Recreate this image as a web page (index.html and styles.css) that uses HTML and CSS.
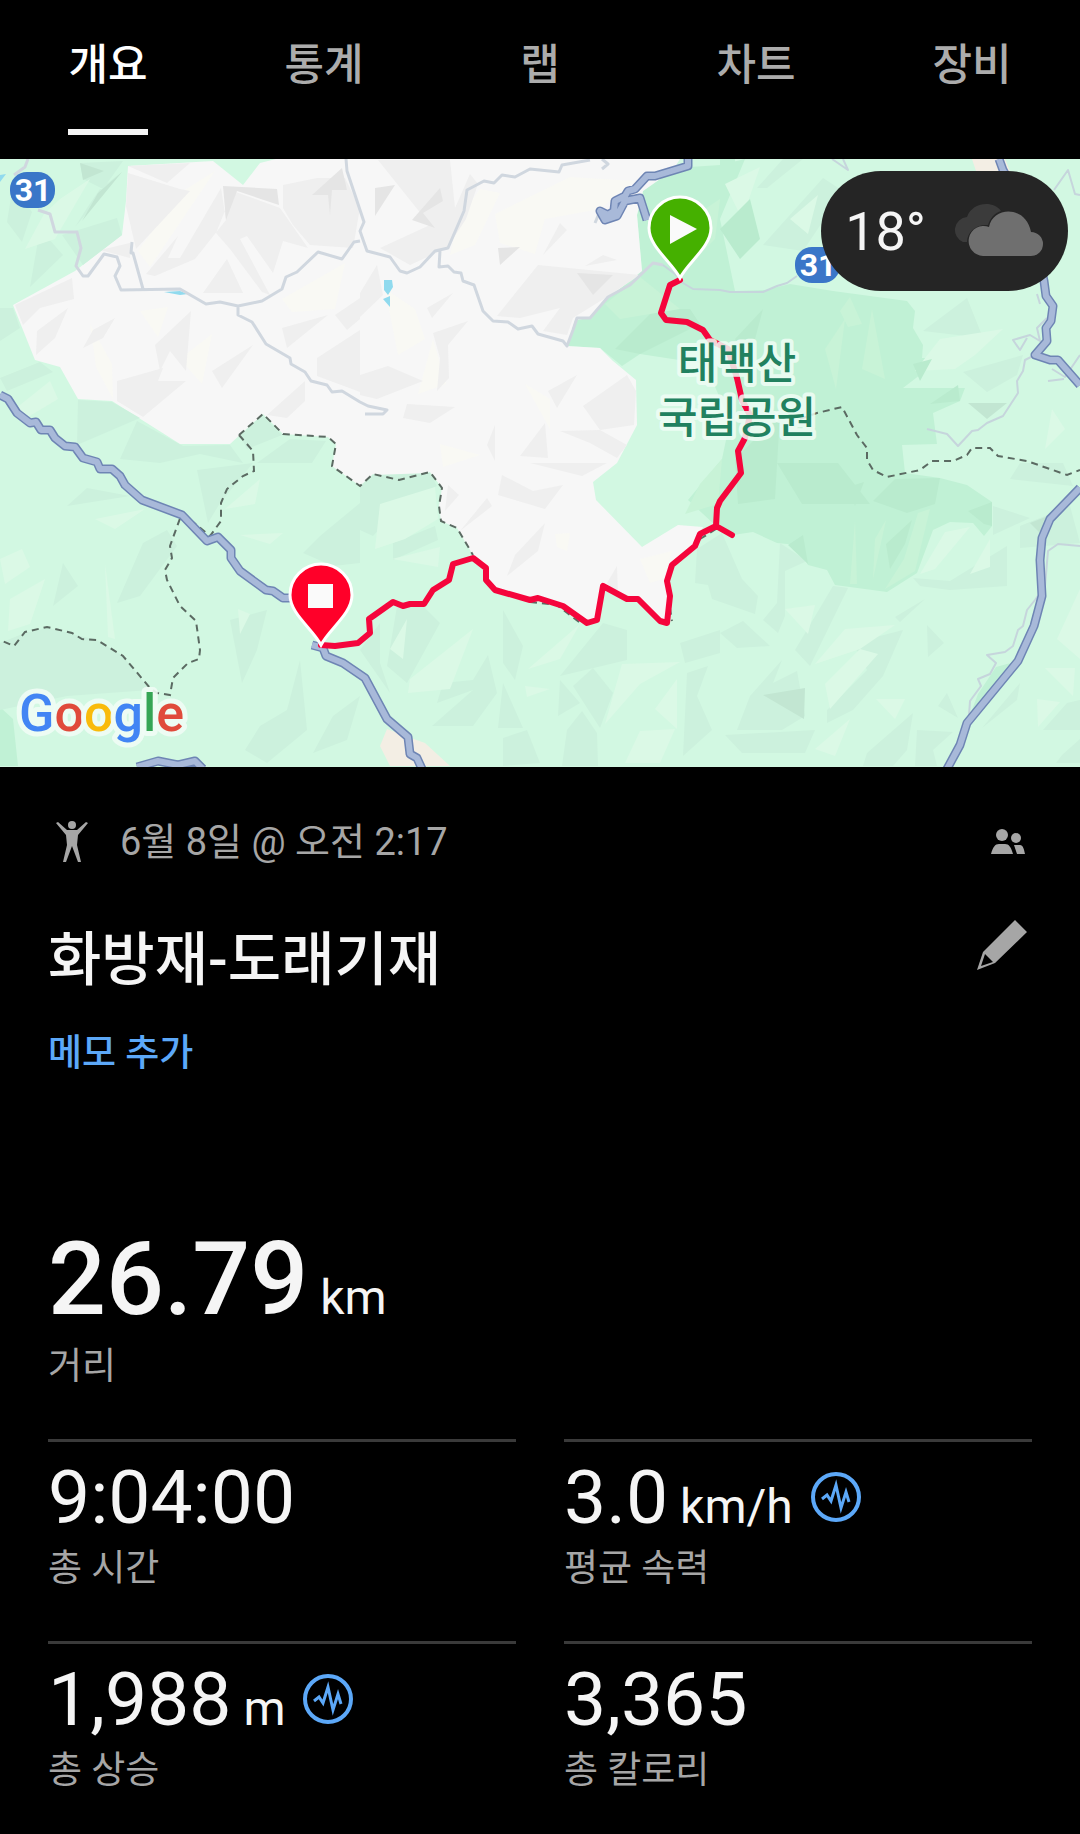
FILE: index.html
```html
<!DOCTYPE html>
<html lang="ko">
<head>
    <meta charset="UTF-8">
    <meta name="viewport" content="width=device-width, initial-scale=1.0">
    <title>화방재-도래기재</title>
    <link rel="stylesheet" href="styles.css">
</head>
<body>
    <nav class="tabs">
        <button class="tab active">개요</button>
        <button class="tab">통계</button>
        <button class="tab">랩</button>
        <button class="tab">차트</button>
        <button class="tab">장비</button>
    </nav>

    <div class="map">
        <svg class="map-svg" viewBox="0 0 1080 608">
            <rect class="land" width="1080" height="608"/>

            <!-- park -->
            <path class="park" d="M673 11L690 8L720 6L745 0L720 60L735 132L765 131L790 125L833 132L907 142L915 152L913 169L923 186L922 199L932 199L933 206L903 229L917 229L965 229L960 242L933 254L937 285L902 286L905 314L940 319L967 326L992 343L992 367L984 377L973 364L950 363L933 371L917 414L887 433L835 426L827 411L808 406L797 386L777 384L753 373L733 376L716 367L688 341L722 300L730 262L705 205L640 195L622 207L600 189L567 187L575 161L590 159L608 139L642 112L637 56L643 32Z"/>
            <path class="park" d="M720 0H735V24L725 30L720 26ZM0 548L13 560L18 607H0ZM1018 502L967 564L978 535L996 508Z"/>

            <!-- bare ground -->
            <path class="bare" d="M128 7L213 2L243 26L260 4L276 0H680L673 11L643 32L637 56L642 112L608 139L590 159L575 161L567 187L600 189L613 202L636 221L637 266L617 304L593 323L596 341L642 388L678 366L703 368L694 387L672 406L667 422L668 437L667 464L638 440L603 427L597 462L583 464L557 444L530 441L495 431L486 421L486 407L473 396L457 369L441 362L439 347L442 329L430 313L399 321L373 315L360 327L332 307L336 285L328 278L283 275L263 255L230 285H180L112 242L78 240L60 208L35 201L13 146L75 112L122 76L126 42Z"/>
            <path class="warm" d="M180 34L215 12L150 108L138 92ZM282 140L345 104L335 150L292 153ZM458 60L480 30L500 34L475 86L450 96ZM495 55L570 18L635 22L600 50L545 60L535 95L500 84ZM180 200L212 175L202 225ZM90 165L112 205L113 240L96 208ZM140 152L168 148L158 178ZM385 130L415 150L425 180L398 196ZM433 180L446 225L418 235ZM525 225L550 240L550 270ZM555 375L570 374L567 392L557 388ZM640 400L672 392L664 420L650 424ZM440 285L480 296L443 308Z"/>
            <path class="peach" d="M387 570L408 578L425 584L450 607H390L380 587ZM972 0H1005L1010 12H976Z"/>
            <path class="grey1" d="M128 7L190 4L167 24ZM128 14L180 30L190 32L136 90L126 47ZM221 29L180 99L168 99L178 77L146 115L155 117L195 100L226 61ZM233 32L280 49L308 89L283 82L273 114L247 77L240 80L270 136L262 133L230 90L216 74ZM227 100L243 134L203 134ZM283 26L317 19L345 19L360 49L353 89L310 86L293 66L283 49ZM15 146L72 119L74 140L40 149L23 166ZM37 172L68 149L55 179L36 196ZM83 189L93 171L115 159L103 179ZM191 152L186 212L170 192L160 212L155 186ZM117 222L163 209L158 222L186 222L143 258L117 242ZM212 212L253 186L222 229ZM282 169L328 156L287 189ZM317 199L360 171V233L317 217ZM100 91L130 84V99ZM335 156L360 139V160L347 171ZM305 222V242L287 259L267 256ZM378 1H450L455 49L470 15L478 25L466 60L447 89L410 106L380 89L430 66ZM538 106L640 116L610 136L573 159L567 176L543 172L560 149L520 159L497 157ZM543 96L560 64L567 71ZM603 96L617 101L585 107ZM360 216L388 207L423 222L377 240L360 236ZM433 174L468 162L448 186L449 219L437 232L440 199ZM407 245L455 248L430 264L403 259ZM548 232L577 216L557 249ZM583 247L627 216L636 232L634 266L600 271ZM545 264L548 299L520 297ZM560 272L600 271L627 286L617 299L590 284ZM495 266V302L487 286ZM360 134L377 106L383 136L360 158ZM427 149L453 134L432 159ZM502 316L533 332L563 326L545 350L498 336ZM530 304H607L582 317ZM448 326L459 336L445 352ZM487 339L492 347L460 372ZM545 364L538 392L507 417L515 396ZM617 407L618 436L607 424Z"/>
            <path class="grey2" d="M223 27L277 30L279 46L237 32L226 61ZM312 36L342 9L347 31H332L330 56L328 36ZM375 29L395 26L375 57ZM440 29L443 42L423 54L435 69L412 61ZM498 89L520 88L500 106ZM577 114L613 116L593 136Z"/>

            <!-- hills -->
            <path class="hill1" d="M80 4L123 2L103 30L83 20ZM122 13L75 68L87 49L100 30ZM7 63L13 26L32 53L22 83ZM40 70L63 96L30 128ZM62 76L117 59L122 76L83 106ZM0 149H13L20 169L0 182ZM0 219L40 203L53 213L7 232ZM78 241L112 243L140 259L77 286ZM120 300L137 262L183 287L230 286L243 304L200 295L160 304ZM262 256L282 276L247 290L240 277ZM257 304L290 280L326 282L312 304ZM67 347L87 329L130 337ZM143 384L167 371L177 387L140 437L117 444ZM63 404L78 427L53 447ZM197 311L253 304L220 344L208 364ZM320 377L360 344V404L333 407L303 394ZM0 484L25 474L48 469L97 481L123 497L150 531L67 537L0 551ZM230 461L267 451L257 491L242 524ZM300 501L287 551L260 567L245 591L267 604L307 571ZM313 594L333 557L360 537L347 581ZM360 327L373 316L430 314L437 327L403 344L373 377L360 371ZM393 384L435 367L438 381L393 401ZM397 447L423 447L440 464L407 524L387 507ZM360 491L380 464V504L390 534ZM503 451L523 487L515 521L503 504ZM488 496L497 534L473 567H432L473 531L437 544L443 524L473 521ZM503 524L523 569H498ZM503 579L527 571L540 604L503 607ZM560 517L603 464L627 471V501ZM560 521L580 544L558 557ZM593 509L613 534L600 569L573 527ZM582 552L597 574L598 607H562L567 571ZM687 514L708 507L697 537L712 571L683 597ZM680 484L720 471V494L685 504ZM697 390L722 374L742 420L758 437L755 455L712 440L708 426L695 424ZM780 384L807 402L785 412V457L778 474L763 461L777 444ZM833 427L848 429L810 507L795 491ZM720 474L743 462L770 487L737 489ZM782 501L750 537L737 571H782L805 557L797 512L773 524ZM725 576L815 571L805 594H742ZM853 484L903 471L883 517L853 551L827 564V551L867 511ZM913 419L950 422L1007 387V427L950 431L920 427ZM927 466L944 484L928 498ZM913 554L907 591L893 607H863L867 594ZM947 534L958 559L938 547ZM917 571L953 573L933 591L937 607H915ZM1020 524L1017 541L982 569ZM1067 544L1080 541V571H1043ZM1020 367L1070 347L1080 384L1020 389ZM1010 320L1020 304H1063L1073 327ZM993 347L1030 359L993 376ZM757 29L783 0H803L767 29ZM763 86L823 19L843 32L803 92ZM923 172L967 139L983 179ZM963 213L1023 196L1017 216L987 233ZM895 458L925 440L900 463ZM1062 596L1080 580V604H1056Z"/>
            <path class="hill2" d="M80 4L104 12L83 21ZM122 13L82 62L98 34ZM763 536L805 529L804 560ZM968 244H1007L987 260ZM1030 364L1048 357L1044 378Z"/>
            <path class="light" d="M25 90L44 55L60 40L90 20L55 80ZM15 250L50 222L58 240L28 258ZM0 400L22 390L30 408L5 425ZM10 440L45 420L30 465L8 472ZM95 360L145 350L115 370ZM225 350L260 320L255 345ZM240 376L283 374L270 385ZM105 405L115 480L108 478ZM238 450L250 455L240 475ZM380 345L435 328L438 360L405 380L375 390ZM392 400L440 388L438 408ZM410 520L473 470L450 530L408 534ZM390 490L407 460L403 500ZM528 510L580 465L560 500ZM525 527L550 530L527 538ZM622 505L680 503L640 525L605 565ZM655 550L677 520V570ZM640 572L675 570L660 604H625ZM815 505L845 470L895 466L860 490ZM825 525L860 490L878 495L830 550ZM876 540H905L895 560ZM815 590L850 560L835 597ZM785 450L815 446L808 475ZM945 373L970 368L935 410L920 415ZM970 415L990 380V408ZM1045 509H1075L1073 537ZM1037 540L1060 543L1038 568ZM1057 480L1080 430V500ZM790 60L818 36L808 75ZM975 196L1003 170L940 180L915 212L955 210ZM1052 250L1045 290L1065 270ZM725 25L760 8L742 60Z"/>
            <path class="park1" d="M735 300L780 255L775 340L738 345ZM777 304H838L870 345H802ZM873 342L895 320L940 319L935 345L907 354ZM848 328L864 323L855 347ZM968 352L992 343V367L984 365ZM788 386L803 376L808 405ZM615 190L655 150L690 150L700 165L640 195ZM913 205L932 200L920 222ZM960 242L930 245L958 226ZM720 70L750 40L760 80L740 100ZM886 385L912 361L905 385L890 410ZM735 180L763 150L755 180L742 190Z"/>
            <path class="park2" d="M855 362L857 425H850ZM875 380L886 361L873 420ZM918 354L930 350L915 412L885 430L904 400ZM872 150L885 220L862 210ZM825 190L845 160L836 230ZM700 325L722 300L718 345L685 355ZM605 145L640 118L680 150L620 160ZM840 152L850 138L862 165L848 168ZM690 60L720 40L715 80L700 95Z"/>

            <!-- water -->
            <path class="water" d="M384 121H392L393 128L388 136L384 131ZM383 140L390 137V148ZM164 133L180 132L188 135L180 136ZM0 16L6 15L0 23Z"/>

            <!-- minor roads -->
            <path class="lane" d="M28 0L25 8L14 16M38 51L50 55L55 73H77L81 89L76 107L83 117H88L104 95L117 98L120 107L115 117L121 131L180 130L206 145L220 143L238 147L262 142L282 130L286 118L297 113L318 93L342 100L354 83L360 82M132 83L131 94H133L143 130M238 147V156L252 163L266 185L290 199L291 205L305 213L311 222L327 226L332 233L342 232L360 243L368 247L387 251L383 255H365M346 0L347 12L364 63L360 72L367 92L390 98L400 112L407 114L420 108L435 92L448 89L464 52L467 31L484 22L494 24L502 16L515 18L530 10L559 13L562 6L590 1M440 92L439 108L448 107L454 113L461 114L463 122L474 126L483 152L493 162L508 163L518 170L532 167L538 175L563 182L567 187L573 171L577 159H590L608 138L630 126L653 104L663 106M602 0L608 5L602 10M595 64L600 52"/>
            <path class="lane lane-green" d="M663 106L675 115L683 124L693 130L720 131L730 133L763 133L777 127L787 124L797 117M927 270L947 275L958 287L972 272L978 271L987 264L1003 257L1018 234L1017 222L1023 212L1025 201L1035 196M1054 31L1068 11L1075 35L1080 36M1047 159L1037 169L1040 182L1030 176L1013 181L1020 191L1027 179M1037 135L1040 145M1080 196L1065 218L1052 210M1048 222L1064 220M832 0L848 11L843 0M1080 387L1058 385L1048 392L1045 427L1035 441L1027 451L1023 467L1018 471L1013 487L1005 493L987 496L996 504L990 515L978 520L981 527L970 542L969 556"/>

            <!-- boundaries -->
            <path class="border-line" d="M239 276L263 255L283 275L328 278L336 285L332 307L360 327L373 315L399 321L430 313L442 329L439 347L441 362L457 369L473 396M239 276L253 292L254 312L243 317L227 330L221 344V362L210 377L182 354L170 387L172 399L165 411L167 421L180 447L196 462L200 491L199 500L188 504L173 519L170 536L157 534L150 529L123 497L97 481L82 480L72 474L47 468L25 473L14 487L0 481M530 443L557 446L583 466M668 437L672 462M700 380L716 370M800 260L817 254L842 248L857 276L867 289V301L873 311L887 318L920 311L932 302H953L967 296L972 289H990L998 297L1027 302L1067 316L1080 311"/>

            <!-- highways, outline and fill -->
            <g class="highway-edge">
                <path id="roads" d="M0 236L8 240L17 254L30 264L36 263L41 271L50 271L55 279L65 287L75 288L83 299L97 303L100 310H112L120 317L125 326L142 341L182 356L207 382L218 378L231 391V399L240 412L266 431L273 432L283 439H293M312 486L323 489L326 497L343 504L365 519L387 560L408 578L410 595L417 599L422 610M1080 329L1050 360L1042 379L1040 401L1042 437L1034 467L1018 502L967 564L960 586L947 610M999 0L1003 11L1030 60L1044 122L1046 137L1053 147L1051 162L1046 169L1047 182L1035 196L1050 201H1058L1080 226M137 608L158 602L178 606L195 602L203 610M688 0V7L655 17H647L635 30L628 32L625 37L615 42L614 52L608 56L600 52L605 61L617 57L625 42L640 39L647 61"/>
            </g>
            <path class="highway" d="M0 236L8 240L17 254L30 264L36 263L41 271L50 271L55 279L65 287L75 288L83 299L97 303L100 310H112L120 317L125 326L142 341L182 356L207 382L218 378L231 391V399L240 412L266 431L273 432L283 439H293M312 486L323 489L326 497L343 504L365 519L387 560L408 578L410 595L417 599L422 610M1080 329L1050 360L1042 379L1040 401L1042 437L1034 467L1018 502L967 564L960 586L947 610M999 0L1003 11L1030 60L1044 122L1046 137L1053 147L1051 162L1046 169L1047 182L1035 196L1050 201H1058L1080 226M137 608L158 602L178 606L195 602L203 610M688 0V7L655 17H647L635 30L628 32L625 37L615 42L614 52L608 56L600 52L605 61L617 57L625 42L640 39L647 61"/>

            <!-- track -->
            <path class="track" d="M680 121L670 126L661 154L666 161L687 163L703 171L710 181L728 190L737 219L742 241L750 256L745 279L738 292L741 314L720 342L717 349L716 367L732 376M716 367L700 375L695 387L672 406L667 422L670 437L667 464L660 462L638 440H627L603 427L597 461L587 464L563 447L538 439L530 441L495 431L486 421V409L473 399L453 405L449 421L433 431L424 445H410L403 447L393 443L369 460L370 474L358 484L335 487L321 486"/>

            <g class="shield">
                <rect x="10" y="13" width="45" height="36" rx="17"/>
                <text x="33" y="42">31</text>
                <rect x="795" y="88" width="45" height="36" rx="17"/>
                <text x="818" y="117">31</text>
            </g>

            <text class="park-name" x="737" y="220">태백산</text>
            <text class="park-name" x="737" y="274">국립공원</text>

            <g class="pin">
                <path class="pin-start" d="M680 119C672 103 649 88 649 69A31 31 0 0 1 711 69C711 88 688 103 680 119Z"/>
                <path class="pin-mark" d="M670 56L697 70L670 85Z"/>
                <path class="pin-end" d="M321 486C313 470 290 455 290 436A31 31 0 0 1 352 436C352 455 329 470 321 486Z"/>
                <rect class="pin-mark" x="308" y="425" width="25" height="24"/>
            </g>

            <text class="google" x="19" y="572"><tspan class="g-blue">G</tspan><tspan class="g-red">o</tspan><tspan class="g-yellow">o</tspan><tspan class="g-blue">g</tspan><tspan class="g-green">l</tspan><tspan class="g-red">e</tspan></text>
        </svg>

        <button class="weather">
            <span>18°</span>
            <svg class="cloud" width="94" height="54" viewBox="0 0 94 54">
                <path fill="#3b3b3b" d="M13 38A13 13 0 0 1 17 13C23 -3 44 -3 51 7C44 9 40 15 38 21C26 20 17 28 17 38Z"/>
                <path fill="#6f6f6f" d="M33 52A15 15 0 1 1 39 23C43 2 76 1 81 28A12 12 0 0 1 81 52Z"/>
            </svg>
        </button>
    </div>

    <main class="content">
        <div class="date-row">
            <svg class="person" width="32" height="42" viewBox="0 0 32 42">
                <circle cx="16" cy="4" r="4"/>
                <path d="M0 2L2 1L11 9H21L30 1L32 2L22 14L21 24L25 41H22L16 25L10 41H7L11 24L10 14Z"/>
            </svg>
            <span class="date">6월 8일 @ 오전 2:17</span>
            <button class="icon-btn">
                <svg width="34" height="26" viewBox="0 0 34 26">
                    <circle cx="11" cy="6" r="6"/>
                    <circle cx="25" cy="9" r="5"/>
                    <path d="M0 25C2 18 4 15 8 15H14C18 15 20 18 22 25ZM23 16H29C32 16 33 20 34 25H26Z"/>
                </svg>
            </button>
        </div>

        <div class="title-row">
            <h1>화방재-도래기재</h1>
            <button class="icon-btn edit">
                <svg width="50" height="50" viewBox="0 0 50 50">
                    <path fill-rule="evenodd" d="M38 0L50 12L18 43L0 50L6 32ZM8 34L4 46L16 42Z"/>
                </svg>
            </button>
        </div>
        <a class="memo" href="#">메모 추가</a>

        <div class="hero">
            <div class="hero-value">26.79<span class="unit">km</span></div>
            <div class="label">거리</div>
        </div>

        <div class="stats">
            <div class="stat">
                <div class="value">
                    <div class="number">9:04:00</div>
                </div>
                <div class="label">총 시간</div>
            </div>
            <div class="stat">
                <div class="value">
                    <div class="number">3.0<span class="unit">km/h</span></div>
                    <button class="graph-btn">
                        <svg width="50" height="52" viewBox="0 0 50 52">
                            <circle cx="25" cy="26" r="23"/>
                            <path d="M11 28L16 24L20 30L25 14L30 37L35 21L38 31"/>
                        </svg>
                    </button>
                </div>
                <div class="label">평균 속력</div>
            </div>
            <div class="stat">
                <div class="value">
                    <div class="number">1,988<span class="unit">m</span></div>
                    <button class="graph-btn">
                        <svg width="50" height="52" viewBox="0 0 50 52">
                            <circle cx="25" cy="26" r="23"/>
                            <path d="M11 28L16 24L20 30L25 14L30 37L35 21L38 31"/>
                        </svg>
                    </button>
                </div>
                <div class="label">총 상승</div>
            </div>
            <div class="stat">
                <div class="value">
                    <div class="number">3,365</div>
                </div>
                <div class="label">총 칼로리</div>
            </div>
        </div>
    </main>
</body>
</html>
```
FILE: styles.css
```css
* {
    box-sizing: border-box;
}
body {
    margin: 0;
    background: #000;
    color: #f5f5f5;
    font-family: Roboto, "Noto Sans CJK KR", sans-serif;
}
button {
    background: none;
    border: 0;
    padding: 0;
    color: inherit;
    font-family: inherit;
    cursor: pointer;
}
svg {
    display: block;
}

/* tabs */
.tabs {
    display: grid;
    grid-template-columns: repeat(5, 1fr);
    justify-items: center;
    padding: 24px 0;
}
.tab {
    height: 111px;
    padding-bottom: 22px;
    border-bottom: 6px solid transparent;
    color: #acacac;
    font-size: 43px;
    font-weight: 500;
    line-height: 83px;
}
.tab.active {
    color: #fff;
    border-color: #f5f5f5;
}

/* map */
.map {
    position: relative;
}
.map-svg {
    width: 100%;
    height: auto;
}
.land { fill: #d2f8e2; }
.park { fill: #c0f1d5; }
.bare { fill: #f7f7f7; }
.warm { fill: #f9f9f4; }
.peach { fill: #f3eee4; }
.grey1 { fill: #efefef; }
.grey2 { fill: #e5e5e5; }
.hill1 { fill: #ccf1dd; }
.hill2 { fill: #c2e6d2; }
.light { fill: #dbf9e6; }
.park1 { fill: #b9ebce; }
.park2 { fill: #c8f3d7; }
.water { fill: #90daee; }
.lane {
    fill: none;
    stroke: #d0d7df;
    stroke-width: 3;
    stroke-linejoin: round;
}
.lane-green {
    stroke: #c6d5dc;
    stroke-width: 2;
}
.border-line {
    fill: none;
    stroke: #5b6a62;
    stroke-width: 2;
    stroke-dasharray: 7 5;
}
.highway-edge {
    fill: none;
    stroke: #6e85b4;
    stroke-width: 9;
    stroke-linejoin: round;
}
.highway {
    fill: none;
    stroke: #a8b9d9;
    stroke-width: 6;
    stroke-linejoin: round;
}
.track {
    fill: none;
    stroke: #f5053c;
    stroke-width: 6;
    stroke-linejoin: round;
    stroke-linecap: round;
}
.shield rect {
    fill: #3a76c8;
}
.shield text {
    fill: #fff;
    font-size: 32px;
    font-weight: 700;
    text-anchor: middle;
}
.park-name {
    fill: #21815f;
    stroke: rgba(240, 253, 246, 0.85);
    stroke-width: 8;
    stroke-linejoin: round;
    paint-order: stroke;
    font-size: 43px;
    font-weight: 500;
    text-anchor: middle;
}
.pin {
    stroke: #fff;
    stroke-width: 3;
}
.pin-start { fill: #45b000; }
.pin-end { fill: #ff0029; }
.pin-mark {
    fill: #fafafa;
    stroke: none;
}
.google {
    font-size: 52px;
    font-weight: 500;
    stroke: rgba(240, 252, 245, 0.9);
    stroke-width: 10;
    stroke-linejoin: round;
    paint-order: stroke;
}
.g-blue { fill: #4285f4; }
.g-red { fill: #e04a3b; }
.g-yellow { fill: #f9bb0b; }
.g-green { fill: #36a555; }

.weather {
    position: absolute;
    top: 12px;
    right: 12px;
    display: flex;
    align-items: center;
    gap: 24px;
    height: 120px;
    padding: 0 24px;
    border-radius: 60px;
    background: #252525;
    color: #f5f5f5;
    font-size: 54px;
}

/* activity info */
.content {
    padding: 51px 48px 40px;
}
.date-row {
    display: flex;
    align-items: center;
    height: 48px;
    padding: 0 7px 0 8px;
    color: #a6a6a6;
}
.person,
.icon-btn svg {
    fill: #a6a6a6;
}
.date {
    flex: 1;
    margin-left: 32px;
    font-size: 38px;
    line-height: 48px;
}
.title-row {
    display: flex;
    justify-content: space-between;
    margin-top: 54px;
}
h1 {
    margin: 0;
    padding-top: 4px;
    font-size: 58px;
    font-weight: 500;
    line-height: 72px;
}
.edit {
    height: 50px;
    margin-right: 5px;
}
.memo {
    display: block;
    width: fit-content;
    margin-top: 34px;
    color: #5ca8f8;
    font-size: 37px;
    font-weight: 500;
    line-height: 48px;
    text-decoration: none;
}

/* numbers */
.hero {
    margin-top: 141px;
    margin-bottom: 48px;
}
.hero-value,
.number {
    display: flex;
    align-items: baseline;
    gap: 12px;
}
.hero-value {
    height: 120px;
    margin-bottom: 4px;
    font-size: 102px;
    font-weight: 500;
    line-height: 120px;
}
.unit {
    font-size: 48px;
    font-weight: 400;
    line-height: 56px;
}
.label {
    color: #a6a6a6;
    font-size: 37px;
    line-height: 48px;
}
.stats {
    display: grid;
    grid-template-columns: 1fr 1fr;
    column-gap: 48px;
}
.stat {
    padding: 11px 0 48px;
    border-top: 3px solid #3a3a3a;
}
.value {
    display: flex;
    align-items: center;
    gap: 18px;
    height: 88px;
    margin-bottom: 4px;
    font-size: 75px;
    line-height: 88px;
}
.graph-btn svg {
    fill: none;
    stroke: #5ca8f8;
    stroke-width: 4;
}
.graph-btn path {
    stroke-width: 3;
}
```
